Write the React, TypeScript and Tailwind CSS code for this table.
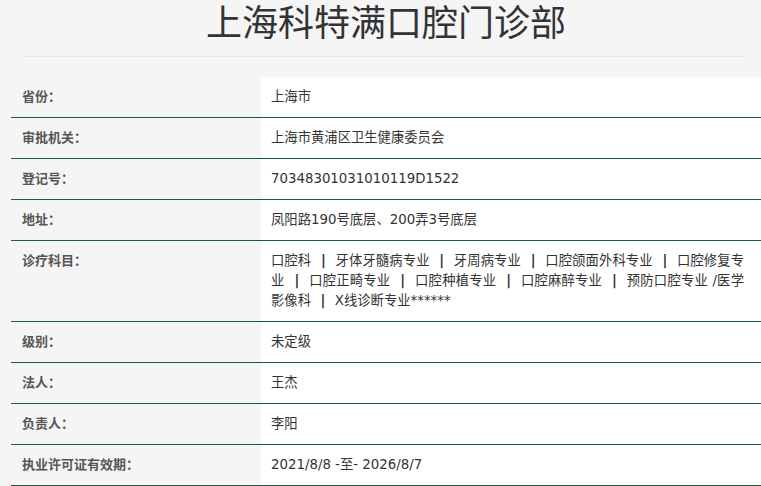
import { Fragment } from "react";

const rows: { label: string; value: string[] }[] = [
  { label: "省份", value: ["上海市"] },
  { label: "审批机关", value: ["上海市黄浦区卫生健康委员会"] },
  { label: "登记号", value: ["70348301031010119D1522"] },
  { label: "地址", value: ["凤阳路190号底层、200弄3号底层"] },
  {
    label: "诊疗科目",
    value: [
      "口腔科",
      "牙体牙髓病专业",
      "牙周病专业",
      "口腔颌面外科专业",
      "口腔修复专业",
      "口腔正畸专业",
      "口腔种植专业",
      "口腔麻醉专业",
      "预防口腔专业 /医学影像科",
      "X线诊断专业******",
    ],
  },
  { label: "级别", value: ["未定级"] },
  { label: "法人", value: ["王杰"] },
  { label: "负责人", value: ["李阳"] },
  { label: "执业许可证有效期", value: ["2021/8/8 -至- 2026/8/7"] },
];

export default function App() {
  return (
    <div className="min-h-screen bg-[#f5f5f5] pl-[11px] font-['DejaVu_Sans','Noto_Sans_CJK_SC',sans-serif]">
      <h1 className="text-center text-[36px] leading-[40px] text-[#333] font-normal font-['Noto_Sans_CJK_SC',sans-serif]">
        上海科特满口腔门诊部
      </h1>
      <div className="ml-[13px] mr-[17px] mt-[16px] h-px bg-[#e8e8e8]"></div>

      <div className="mt-[20px]">
        {rows.map((row) => (
          <div key={row.label} className="flex border-b border-[#1d5a3f]">
            <div className="w-[250px] shrink-0 px-[11px] py-[10px] text-[13px] leading-[20px] font-bold text-[#555]">
              {row.label}：
            </div>
            <div className="flex-1 bg-white pl-[10px] pr-[17px] py-[10px] text-[13.33px] leading-[20px] text-[#333] text-justify">
              {row.value.map((item, i) => (
                <Fragment key={i}>
                  {i > 0 && (
                    <>
                      {"\u00a0\u00a0"}
                      <b className="mx-[1px] text-[#333]">|</b>
                      {" \u00a0"}
                    </>
                  )}
                  {item}
                </Fragment>
              ))}
            </div>
          </div>
        ))}
      </div>
    </div>
  );
}
